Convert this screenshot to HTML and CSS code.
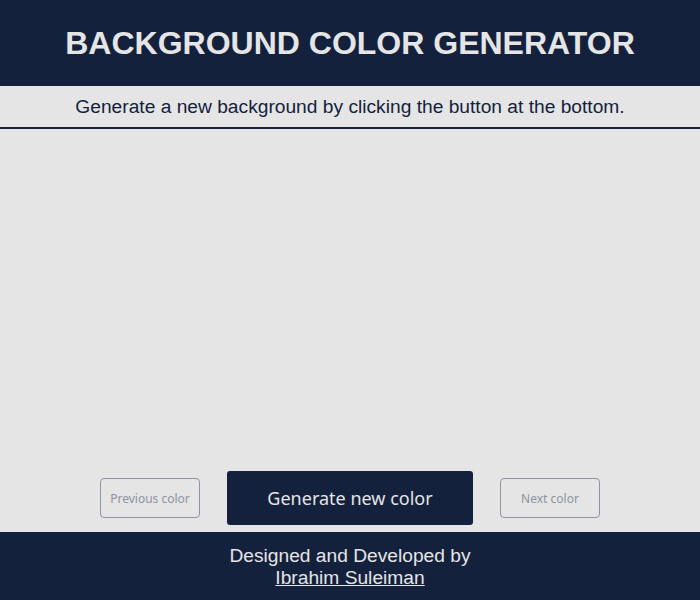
FILE: index.html
```html
<!DOCTYPE html>
<html lang="en">
<head>
<meta charset="utf-8">
<title>Background Color Generator</title>
<link rel="stylesheet" href="styles.css">
</head>
<body>
<div class="page">
  <header class="header">
    <h1 class="title">BACKGROUND COLOR GENERATOR</h1>
  </header>
  <p class="subtitle">Generate a new background by clicking the button at the bottom.</p>
  <main class="main">
    <div class="controls">
      <button class="btn btn-side" disabled>Previous color</button>
      <button class="btn btn-main">Generate new color</button>
      <button class="btn btn-side" disabled>Next color</button>
    </div>
  </main>
  <footer class="footer">
    <p class="credit">Designed and Developed by<br><a class="author" href="#">Ibrahim Suleiman</a></p>
  </footer>
</div>
</body>
</html>
```
FILE: styles.css
```css
* { box-sizing: border-box; }
html, body { margin: 0; padding: 0; }
body {
  background: #e5e5e5;
  font-family: "Liberation Sans", Arial, sans-serif;
  color: #14213d;
}
.page {
  display: flex;
  flex-direction: column;
  height: 100vh;
}
.header {
  background: #14213d;
  height: 86px;
  display: flex;
  align-items: center;
  justify-content: center;
}
.title {
  margin: 0;
  font-size: 32px;
  font-weight: bold;
  color: #e5e5e5;
}
.subtitle {
  margin: 0;
  height: 43px;
  border-bottom: 2px solid #14213d;
  display: flex;
  align-items: center;
  justify-content: center;
  font-size: 19.2px;
}
.main {
  flex: 1;
  display: flex;
  align-items: flex-end;
  justify-content: center;
  padding-bottom: 7px;
}
.controls {
  display: flex;
  align-items: center;
  gap: 27px;
}
.btn {
  font-family: "Noto Sans", "Open Sans", sans-serif;
  cursor: pointer;
}
.btn-side {
  width: 100px;
  height: 40px;
  background: transparent;
  border: 1px solid #8d93a3;
  border-radius: 4px;
  color: #8d93a3;
  font-size: 12px;
}
.btn-main {
  width: 246px;
  height: 54px;
  background: #14213d;
  color: #e5e5e5;
  border: none;
  border-radius: 3px;
  font-size: 18px;
}
.footer {
  background: #14213d;
  height: 68px;
  display: flex;
  align-items: center;
  justify-content: center;
}
.credit {
  margin: 0;
  text-align: center;
  color: #e5e5e5;
  font-size: 19.2px;
  line-height: 22px;
  padding-top: 1px;
}
.author {
  color: #e5e5e5;
}
```
